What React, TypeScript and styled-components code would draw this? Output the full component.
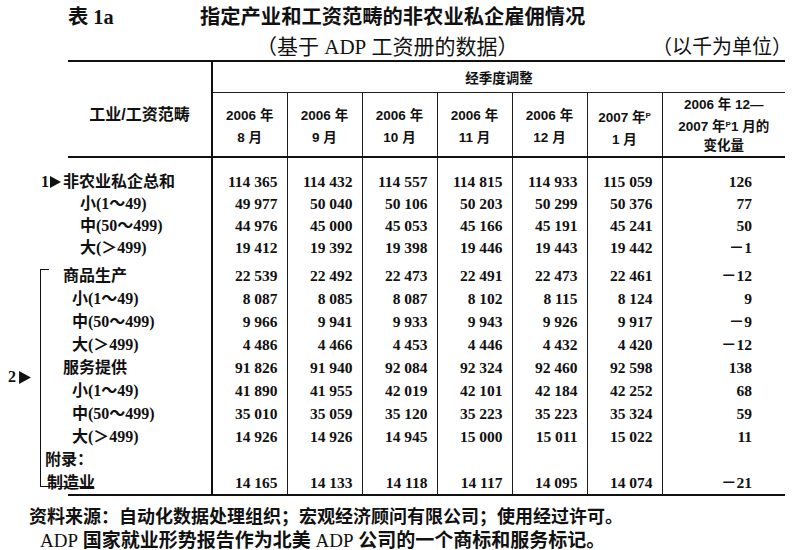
import React from "react"
import styled, { createGlobalStyle } from "styled-components"

const GlobalStyle = createGlobalStyle`
  html, body {
    margin: 0;
    padding: 0;
    background: #fff;
  }
  body {
    font-family: "Liberation Serif", "Noto Sans CJK SC", serif;
    color: #111;
  }
`

const months = [
  ["2006 年", "8 月"],
  ["2006 年", "9 月"],
  ["2006 年", "10 月"],
  ["2006 年", "11 月"],
  ["2006 年", "12 月"],
  ["2007 年", "1 月"],
]

type Row = {
  label: string
  indent: number
  values: string[]
  change: string
  gap?: number
  line?: number
  marker?: string
}

const rows: Row[] = [
  { label: "非农业私企总和", indent: -27, marker: "1", gap: 13, line: 22, values: ["114 365", "114 432", "114 557", "114 815", "114 933", "115 059"], change: "126" },
  { label: "小(1～49)", indent: 12, line: 22, values: ["49 977", "50 040", "50 106", "50 203", "50 299", "50 376"], change: "77" },
  { label: "中(50～499)", indent: 12, line: 22, values: ["44 976", "45 000", "45 053", "45 166", "45 191", "45 241"], change: "50" },
  { label: "大(＞499)", indent: 12, line: 22, values: ["19 412", "19 392", "19 398", "19 446", "19 443", "19 442"], change: "－1" },
  { label: "商品生产", indent: -5, gap: 5, values: ["22 539", "22 492", "22 473", "22 491", "22 473", "22 461"], change: "－12" },
  { label: "小(1～49)", indent: 4, values: ["8 087", "8 085", "8 087", "8 102", "8 115", "8 124"], change: "9" },
  { label: "中(50～499)", indent: 4, values: ["9 966", "9 941", "9 933", "9 943", "9 926", "9 917"], change: "－9" },
  { label: "大(＞499)", indent: 4, values: ["4 486", "4 466", "4 453", "4 446", "4 432", "4 420"], change: "－12" },
  { label: "服务提供", indent: -5, values: ["91 826", "91 940", "92 084", "92 324", "92 460", "92 598"], change: "138" },
  { label: "小(1～49)", indent: 4, values: ["41 890", "41 955", "42 019", "42 101", "42 184", "42 252"], change: "68" },
  { label: "中(50～499)", indent: 4, values: ["35 010", "35 059", "35 120", "35 223", "35 223", "35 324"], change: "59" },
  { label: "大(＞499)", indent: 4, values: ["14 926", "14 926", "14 945", "15 000", "15 011", "15 022"], change: "11" },
  { label: "附录：", indent: -23, values: ["", "", "", "", "", ""], change: "" },
  { label: "制造业", indent: -21, values: ["14 165", "14 133", "14 118", "14 117", "14 095", "14 074"], change: "－21" },
]

const Arrow = ({ size = 11 }: { size?: number }) => (
  <ArrowSvg viewBox="0 0 11 12" width={size} height={size + 1}>
    <polygon points="0,0 11,6 0,12" fill="#111" />
  </ArrowSvg>
)

const App = () => {
  return (
    <Page>
      <GlobalStyle />
      <TitleRow>
        <TableNo>表 1a</TableNo>
        <Title>指定产业和工资范畴的非农业私企雇佣情况</Title>
      </TitleRow>
      <SubRow>
        <span>（基于 <Latin>ADP</Latin> 工资册的数据）</span>
        <Unit>（以千为单位）</Unit>
      </SubRow>

      <TableWrap>
        <Bracket />
        <SideMarker>
          2<Arrow size={12} />
        </SideMarker>
        <Table>
          <colgroup>
            <col style={{ width: 144 }} />
            {months.map((_, i) => (
              <col key={i} style={{ width: 75 }} />
            ))}
            <col style={{ width: 123 }} />
          </colgroup>
          <thead>
            <tr>
              <HeadLabel rowSpan={2}>工业/工资范畴</HeadLabel>
              <Seasonal colSpan={7}>经季度调整</Seasonal>
            </tr>
            <tr>
              {months.map(([y, m], i) => (
                <MonthHead key={i}>
                  {y}
                  {i === 5 && <Sup>P</Sup>}
                  <br />
                  {m}
                </MonthHead>
              ))}
              <ChangeHead>
                2006 年 12—
                <br />
                2007 年<Sup>P</Sup>1 月的
                <br />
                变化量
              </ChangeHead>
            </tr>
          </thead>
          <tbody>
            {rows.map((r, i) => (
              <tr key={i}>
                <LabelCell $indent={r.indent} $gap={r.gap} $line={r.line}>
                  {r.marker && (
                    <>
                      {r.marker}
                      <Arrow />
                    </>
                  )}
                  {r.label}
                </LabelCell>
                {r.values.map((v, j) => (
                  <NumCell key={j} $gap={r.gap} $line={r.line}>
                    {v}
                  </NumCell>
                ))}
                <ChangeCell $gap={r.gap} $line={r.line}>
                  {r.change}
                </ChangeCell>
              </tr>
            ))}
          </tbody>
        </Table>
      </TableWrap>

      <Footer>
        <FootLine>资料来源：自动化数据处理组织；宏观经济顾问有限公司；使用经过许可。</FootLine>
        <FootLineWide>
          <Latin>ADP</Latin> 国家就业形势报告作为北美 <Latin>ADP</Latin> 公司的一个商标和服务标记。
        </FootLineWide>
      </Footer>
    </Page>
  )
}

export default App

const Page = styled.div`
  width: 800px;
  height: 550px;
  overflow: hidden;
`

const TitleRow = styled.div`
  display: flex;
  align-items: center;
  height: 30px;
  padding-left: 68px;
  font-size: 20.3px;
  font-weight: 700;
`

const TableNo = styled.div`
  width: 132px;
`

const Title = styled.div`
  font-family: "Noto Sans CJK SC", sans-serif;
`

const SubRow = styled.div`
  display: flex;
  align-items: center;
  height: 30px;
  padding-left: 256px;
  padding-right: 8px;
  font-size: 21px;
  font-weight: 400;
`

const Unit = styled.span`
  margin-left: auto;
  font-size: 20px;
`

const Latin = styled.span`
  font-family: "Liberation Serif", serif;
  font-weight: 400;
`

const TableWrap = styled.div`
  position: relative;
  margin-left: 68px;
  width: 717px;
`

const Bracket = styled.div`
  position: absolute;
  left: -28px;
  top: 209px;
  width: 8px;
  height: 217px;
  border-left: 1.5px solid #111;
  border-top: 1.5px solid #111;

  &::after {
    content: "";
    position: absolute;
    left: -1.5px;
    bottom: 0;
    width: 54px;
    border-bottom: 1.5px solid #111;
  }
`

const SideMarker = styled.div`
  position: absolute;
  left: -60px;
  top: 309px;
  display: flex;
  align-items: center;
  gap: 2px;
  font-size: 16px;
  font-weight: 700;
  line-height: 16px;
`

const ArrowSvg = styled.svg`
  display: inline-block;
  vertical-align: -1px;
  margin: 0 2px 0 1px;
`

const Table = styled.table`
  border-collapse: collapse;
  table-layout: fixed;
  width: 717px;
  border-top: 2px solid #111;
  border-bottom: 2.5px solid #111;
`

const HeadCell = styled.th`
  padding: 0;
  font-family: "Liberation Sans", "Noto Sans CJK SC", sans-serif;
  font-weight: 700;
  font-size: 13.5px;
  text-align: center;
  vertical-align: top;
  border-right: 1.5px solid #1c1c1c;
  white-space: nowrap;
`

const HeadLabel = styled(HeadCell)`
  font-size: 16px;
  vertical-align: middle;
  padding-top: 8px;
  border-right: 2px solid #111;
  border-bottom: 2px solid #111;
`

const Seasonal = styled(HeadCell)`
  padding-top: 4px;
  line-height: 26px;
  font-size: 13.5px;
  border-right: none;
  border-bottom: 1px solid #222;
`

const MonthHead = styled(HeadCell)`
  padding: 12px 0 5px;
  line-height: 22px;
  border-bottom: 2px solid #111;
`

const ChangeHead = styled(HeadCell)`
  padding-top: 2px;
  line-height: 19.5px;
  border-right: none;
  border-bottom: 2px solid #111;
`

const Sup = styled.span`
  font-size: 8px;
  vertical-align: 4px;
`

const Cell = styled.td<{ $gap?: number; $line?: number }>`
  padding: ${(p) => p.$gap ?? 0}px 0 0;
  line-height: ${(p) => p.$line ?? 23}px;
  vertical-align: top;
  border-right: 1.5px solid #1c1c1c;
  white-space: nowrap;
`

const LabelCell = styled(Cell)<{ $indent: number }>`
  text-indent: ${(p) => p.$indent}px;
  text-align: left;
  font-size: 16px;
  font-weight: 700;
  border-right: 2px solid #111;
`

const NumCell = styled(Cell)`
  text-align: right;
  padding-right: 9px;
  font-size: 15.5px;
  font-weight: 700;
`

const ChangeCell = styled(NumCell)`
  padding-right: 33px;
  border-right: none;
`

const Footer = styled.div`
  margin-top: 9px;
  padding-left: 29px;
  font-weight: 700;
`

const FootLine = styled.div`
  font-size: 18px;
  line-height: 25px;
`

const FootLineWide = styled.div`
  padding-left: 11px;
  font-size: 19px;
  line-height: 21px;
`
